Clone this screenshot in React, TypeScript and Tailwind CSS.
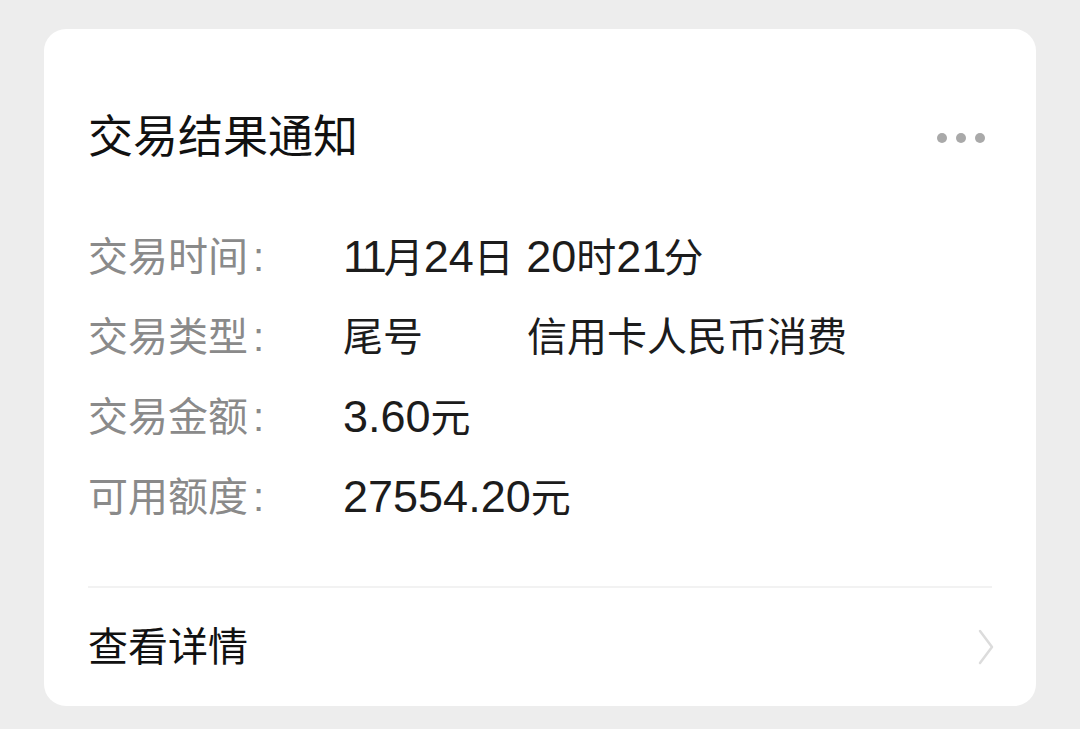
import React from "react";

// digits in the source font are a bit larger than the CJK glyphs
function Num({ children }: { children: React.ReactNode }) {
  return <span className="text-[45px]">{children}</span>;
}

function One() {
  return <span className="tracking-[-3px]">1</span>;
}

const rows = [
  {
    label: "交易时间",
    value: (
      <span>
        <Num>
          <One />
          <One />
        </Num>
        月<Num>24</Num>日<Num> 20</Num>时<Num>2<One /></Num>分
      </span>
    ),
  },
  {
    label: "交易类型",
    value: (
      <span className="flex">
        <span>尾号</span>
        <span className="ml-[104px]">信用卡人民币消费</span>
      </span>
    ),
  },
  {
    label: "交易金额",
    value: (
      <span>
        <Num>3.60</Num>元
      </span>
    ),
  },
  {
    label: "可用额度",
    value: (
      <span>
        <Num>27554.20</Num>元
      </span>
    ),
  },
];

export default function App() {
  return (
    <div
      className="w-[1080px] h-[729px] bg-[#ededed] pt-[29px] pl-[44px]"
      style={{ fontFamily: '"Liberation Sans", "Noto Sans CJK SC", sans-serif' }}
    >
      <div className="w-[992px] h-[677px] bg-white rounded-[22px] px-[44px] pt-[79px] flex flex-col">
        <div className="flex items-center justify-between h-[60px]">
          <h1 className="text-[45px] leading-[60px] text-[#111111]">交易结果通知</h1>
          <div className="flex gap-[9px] mr-[7px]">
            <span className="w-[10px] h-[10px] rounded-full bg-[#a9a9a9]" />
            <span className="w-[10px] h-[10px] rounded-full bg-[#a9a9a9]" />
            <span className="w-[10px] h-[10px] rounded-full bg-[#a9a9a9]" />
          </div>
        </div>

        <div className="mt-[49px] flex flex-col">
          {rows.map((r) => (
            <div key={r.label} className="flex items-center h-[80px] text-[40px]">
              <span className="w-[255px] text-[#8a8a8a]">
                {r.label}
                <span className="ml-[5px]">:</span>
              </span>
              <span className="text-[#1c1c1c]">{r.value}</span>
            </div>
          ))}
        </div>

        <div className="mt-[49px] h-[2px] bg-[#f2f2f2]" />

        <div className="flex-1 flex items-center justify-between">
          <span className="text-[40px] text-[#111111]">查看详情</span>
          <svg width="18" height="36" viewBox="0 0 18 36" fill="none" className="mr-[-3px]">
            <path d="M3 2 L15 18 L3 34" stroke="#dcdcdc" strokeWidth="2.5" strokeLinecap="round" strokeLinejoin="round" />
          </svg>
        </div>
      </div>
    </div>
  );
}
